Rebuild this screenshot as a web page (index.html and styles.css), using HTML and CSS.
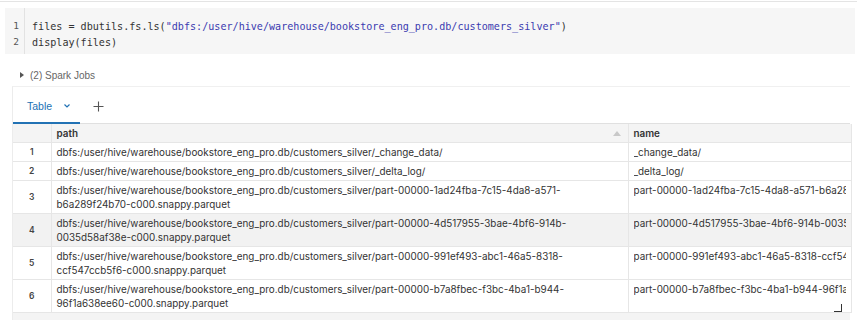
FILE: index.html
```html
<!DOCTYPE html>
<html lang="en">
<head>
  <meta charset="UTF-8">
  <title>Notebook cell</title>
  <link rel="stylesheet" href="styles.css">
</head>
<body>

  <div class="cell">
    <div class="code">
      <div class="gutter">
        <div>1</div>
        <div>2</div>
      </div>
      <pre class="source">files = dbutils.fs.ls(<span class="str">"dbfs:/user/hive/warehouse/bookstore_eng_pro.db/customers_silver"</span>)
display(files)</pre>
    </div>

    <div class="jobs"><span class="caret"></span>(2) Spark Jobs</div>

    <div class="output">
      <div class="tabs">
        <div class="tab active">Table
          <svg class="chev" width="8" height="6" viewBox="0 0 8 6"><path d="M1.5 1.5 L4 4 L6.5 1.5" fill="none" stroke="#2272b4" stroke-width="1.2"/></svg>
        </div>
        <div class="tab add">
          <svg width="11" height="11" viewBox="0 0 11 11"><path d="M5.5 0.5 V10.5 M0.5 5.5 H10.5" stroke="#555" stroke-width="1.1"/></svg>
        </div>
      </div>

      <table class="grid">
        <colgroup>
          <col class="c-idx">
          <col class="c-path">
          <col class="c-name">
        </colgroup>
        <thead>
          <tr>
            <th></th>
            <th>path <span class="sort"></span></th>
            <th>name</th>
          </tr>
        </thead>
        <tbody>
          <tr>
            <td class="idx">1</td>
            <td>dbfs:/user/hive/warehouse/bookstore_eng_pro.db/customers_silver/_change_data/</td>
            <td class="nm"><div>_change_data/</div></td>
          </tr>
          <tr>
            <td class="idx">2</td>
            <td>dbfs:/user/hive/warehouse/bookstore_eng_pro.db/customers_silver/_delta_log/</td>
            <td class="nm"><div>_delta_log/</div></td>
          </tr>
          <tr>
            <td class="idx">3</td>
            <td>dbfs:/user/hive/warehouse/bookstore_eng_pro.db/customers_silver/part-00000-1ad24fba-7c15-4da8-a571-<br>b6a289f24b70-c000.snappy.parquet</td>
            <td class="nm"><div>part-00000-1ad24fba-7c15-4da8-a571-b6a289f24b70-c000.snappy.parquet</div></td>
          </tr>
          <tr class="hover">
            <td class="idx">4</td>
            <td>dbfs:/user/hive/warehouse/bookstore_eng_pro.db/customers_silver/part-00000-4d517955-3bae-4bf6-914b-<br>0035d58af38e-c000.snappy.parquet</td>
            <td class="nm"><div>part-00000-4d517955-3bae-4bf6-914b-0035d58af38e-c000.snappy.parquet</div></td>
          </tr>
          <tr>
            <td class="idx">5</td>
            <td>dbfs:/user/hive/warehouse/bookstore_eng_pro.db/customers_silver/part-00000-991ef493-abc1-46a5-8318-<br>ccf547ccb5f6-c000.snappy.parquet</td>
            <td class="nm"><div>part-00000-991ef493-abc1-46a5-8318-ccf547ccb5f6-c000.snappy.parquet</div></td>
          </tr>
          <tr>
            <td class="idx">6</td>
            <td>dbfs:/user/hive/warehouse/bookstore_eng_pro.db/customers_silver/part-00000-b7a8fbec-f3bc-4ba1-b944-<br>96f1a638ee60-c000.snappy.parquet</td>
            <td class="nm"><div>part-00000-b7a8fbec-f3bc-4ba1-b944-96f1a638ee60-c000.snappy.parquet</div></td>
          </tr>
        </tbody>
      </table>
      <div class="resize"></div>
      <div class="track"></div>
    </div>
  </div>

</body>
</html>
```

FILE: styles.css
```css
body {
  margin: 0;
  background: #fff;
  font-family: "Liberation Sans", Arial, sans-serif;
  color: #333;
}

.cell {
  border-top: 1px solid #e4e4e4;
  margin-top: 1px;
  padding-top: 6px;
}

.code {
  display: flex;
  background: #f6f6f6;
  margin: 0 2px 0 5px;
  height: 46px;
}

.gutter {
  width: 20px;
  border-right: 1px solid #e2e2e2;
  padding-top: 10px;
  font-family: "DejaVu Sans Mono", monospace;
  font-size: 9.5px;
  line-height: 16px;
  color: #555;
  text-align: right;
  box-sizing: border-box;
}

.gutter div {
  padding-right: 5px;
}

.source {
  margin: 0;
  padding: 11px 0 0 7px;
  font-family: "DejaVu Sans Mono", monospace;
  font-size: 10.1px;
  line-height: 16px;
  color: #333;
}

.source .str {
  color: #3b3bb0;
}

.jobs {
  margin: 15px 0 0 20px;
  font-size: 10px;
  color: #666;
  display: flex;
  align-items: center;
  height: 12px;
}

.caret {
  width: 0;
  height: 0;
  border-left: 4px solid #555;
  border-top: 3px solid transparent;
  border-bottom: 3px solid transparent;
  margin-right: 6px;
}

.output {
  margin: 5px 7px 0 12px;
  border-top: 1px solid #f0f0f0;
  border-left: 1px solid #ececec;
  position: relative;
}

.tabs {
  display: flex;
  align-items: center;
  height: 36px;
  border-bottom: 1px solid #e0e0e0;
}

.tab {
  display: flex;
  align-items: center;
  height: 100%;
  box-sizing: border-box;
  font-size: 10.5px;
  padding-top: 2px;
}

.tab.active {
  color: #2272b4;
  padding-left: 14px;
  width: 67px;
  border-bottom: 2px solid #2272b4;
  margin-bottom: -1px;
}

.chev {
  margin-left: 11px;
}

.tab.add {
  padding-left: 13px;
}

.grid {
  border-collapse: collapse;
  table-layout: fixed;
  width: 838px;
  font-family: Inter, "Liberation Sans", sans-serif;
  font-size: 9.9px;
  line-height: 14px;
}

.c-idx { width: 38px; }
.c-path { width: 577px; }
.c-name { width: 223px; }

.grid th,
.grid td {
  border-bottom: 1px solid #e6e6e6;
  border-right: 1px solid #e6e6e6;
  padding: 2px 5px;
  text-align: left;
  vertical-align: top;
  color: #333;
}

.grid th {
  background: #f4f4f4;
  font-weight: 600;
  position: relative;
}

.sort {
  position: absolute;
  right: 7px;
  top: 7px;
  border-bottom: 5px solid #c8c8c8;
  border-left: 4px solid transparent;
  border-right: 4px solid transparent;
}

.grid td.idx {
  text-align: center;
  vertical-align: middle;
  font-size: 8.5px;
  font-weight: 600;
  color: #444;
}

.grid td.nm div {
  white-space: nowrap;
  overflow: hidden;
}

.grid tr.hover td {
  background: #f2f2f2;
}

.resize {
  position: absolute;
  right: 8px;
  bottom: 9px;
  width: 7px;
  height: 7px;
  border-right: 1.5px solid #333;
  border-bottom: 1.5px solid #333;
}

.track {
  height: 8px;
  background: #f4f4f4;
}
```
